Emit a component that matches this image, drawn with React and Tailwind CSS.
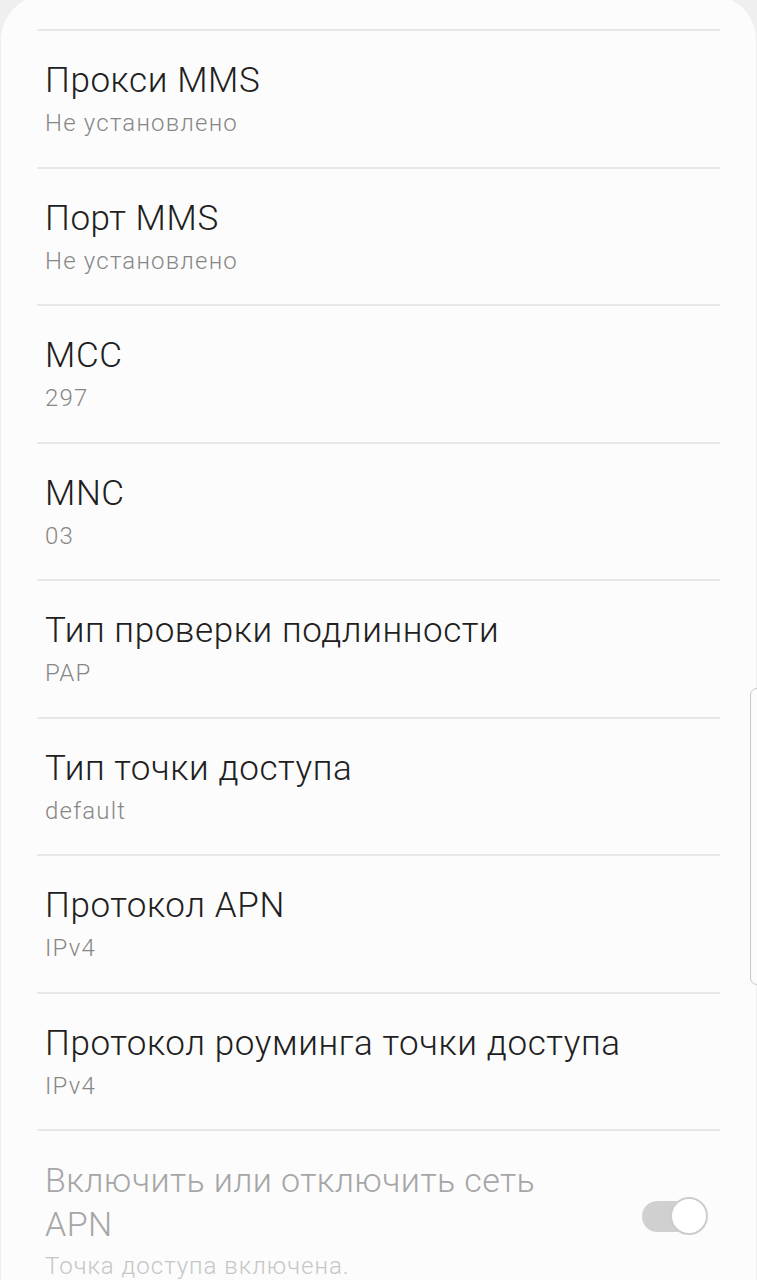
import React from 'react'

const rows = [
  { title: 'Прокси MMS', value: 'Не установлено' },
  { title: 'Порт MMS', value: 'Не установлено' },
  { title: 'MCC', value: '297' },
  { title: 'MNC', value: '03' },
  { title: 'Тип проверки подлинности', value: 'PAP' },
  { title: 'Тип точки доступа', value: 'default' },
  { title: 'Протокол APN', value: 'IPv4' },
  { title: 'Протокол роуминга точки доступа', value: 'IPv4' },
]

function Divider() {
  return <div className="mx-[36px] h-[2px] bg-[#e8e8e8]" />
}

function Row({ title, value }) {
  return (
    <div>
      <Divider />
      <div className="pl-[44px] pr-[36px] pt-[29px] pb-[29.5px]">
        <p className="text-[35px] leading-[42px] tracking-[0.6px] font-light text-[#202020]">{title}</p>
        <p className="mt-[7px] text-[24px] leading-[28px] tracking-[1.2px] font-light text-[#878787]">{value}</p>
      </div>
    </div>
  )
}

export default function App() {
  return (
    <div
      className="relative w-[757px] h-[1280px] overflow-hidden bg-[#efefef]"
      style={{ fontFamily: 'Roboto, "Noto Sans", sans-serif' }}
    >
      <div className="mx-[1px] -mt-[5px] pt-[34px] rounded-t-[45px] bg-[#fcfcfc] h-[1300px]">
        {rows.map((r) => (
          <Row key={r.title} {...r} />
        ))}

        {/* APN on/off, disabled */}
        <Divider />
        <div className="flex items-start pl-[44px] pr-[48px] pt-[27px] pb-[28px]">
          <div className="w-[540px]">
            <p className="text-[34px] leading-[44px] tracking-[0.4px] font-light text-[#a6a6a6]">
              Включить или отключить сеть APN
            </p>
            <p className="mt-[6px] text-[24px] leading-[28px] tracking-[1px] font-light text-[#c6c6c6]">
              Точка доступа включена.
            </p>
          </div>
          <div className="ml-auto mt-[39px] flex items-center">
            <div className="w-[40px] h-[31px] rounded-l-full bg-[#d0d0d0] -mr-[12px]" />
            <div className="w-[38px] h-[38px] rounded-full bg-white border-2 border-[#cccccc]" />
          </div>
        </div>
      </div>

      {/* scroll indicator */}
      <div className="absolute left-[750px] top-[688px] w-[14px] h-[297px] rounded-[7px] border border-[#c8c8c8] bg-[#fcfcfc]" />
    </div>
  )
}
